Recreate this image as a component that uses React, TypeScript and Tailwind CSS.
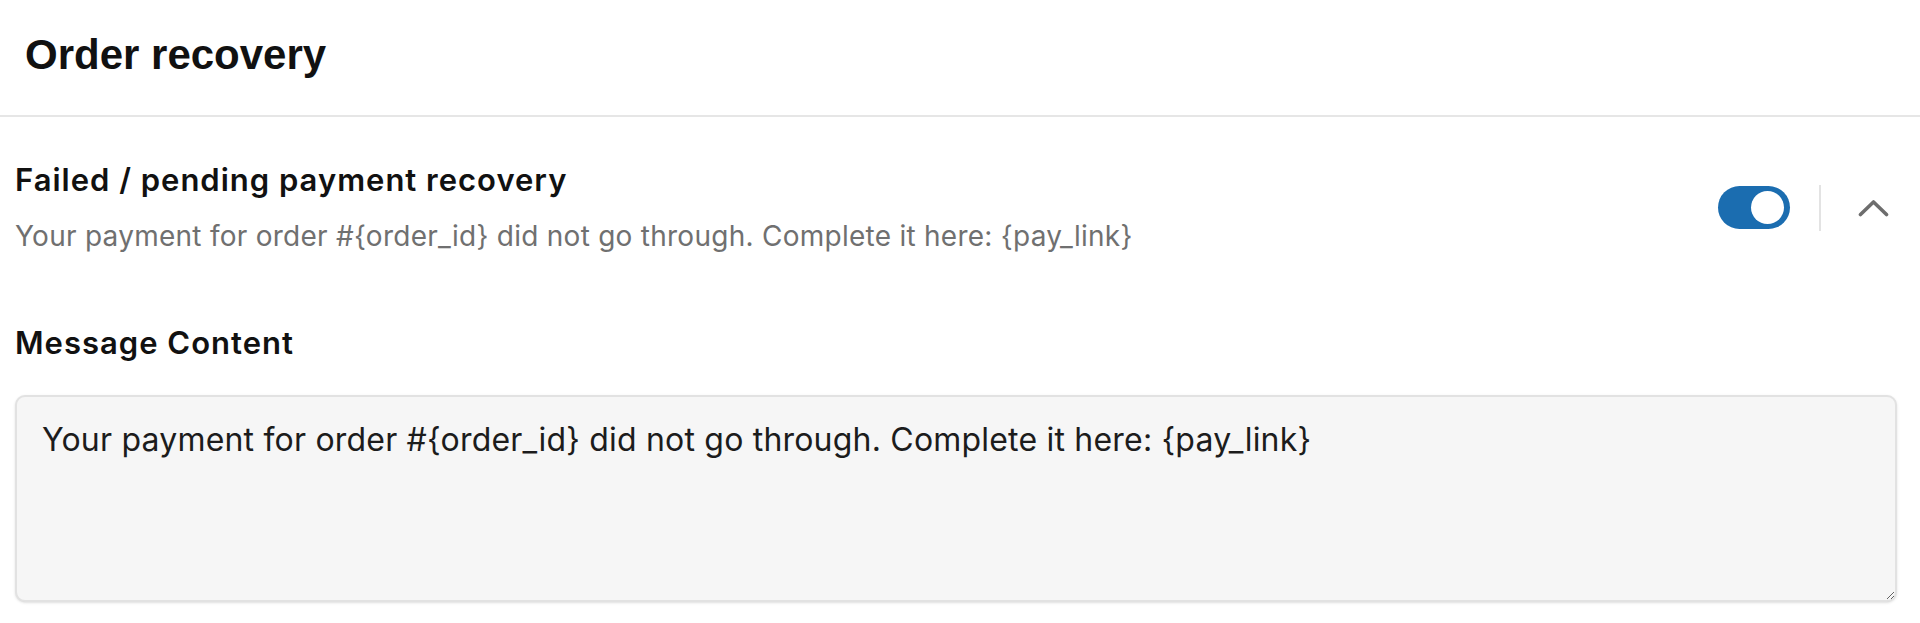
import { useState } from "react";

export default function App() {
  const [enabled, setEnabled] = useState(true);
  const message =
    "Your payment for order #{order_id} did not go through. Complete it here: {pay_link}";

  return (
    <div className="min-h-screen bg-white text-[#111] font-['Inter','Noto_Sans',sans-serif]">
      {/* Page header */}
      <header className="h-[117px] border-b-2 border-[#e6e6e6] pl-[25px] pt-[34px]">
        <h1 className="text-[42px] leading-[42px] font-bold font-['Liberation_Sans','Arial',sans-serif] text-[#111]">
          Order recovery
        </h1>
      </header>

      <section className="pl-[15px] pr-[31px]">
        {/* Rule header */}
        <div className="flex items-center pt-[45px]">
          <div className="flex-1">
            <h2 className="text-[31px] leading-[36px] font-semibold tracking-[1px] text-[#111]">
              Failed / pending payment recovery
            </h2>
            <p className="mt-[21px] text-[28px] leading-[34px] tracking-[0.26px] text-[#707070]">
              {message}
            </p>
          </div>
          <div className="flex items-center">
            <button
              type="button"
              onClick={() => setEnabled(!enabled)}
              className={`flex h-[43px] w-[72px] items-center rounded-full px-[6px] ${
                enabled ? "justify-end bg-[#1b6db0]" : "justify-start bg-[#cfcfcf]"
              }`}
              aria-label="Toggle recovery"
            >
              <span className="h-[33px] w-[33px] rounded-full bg-white" />
            </button>
            <div className="ml-[29px] h-[46px] w-[2px] bg-[#e3e3e3]" />
            <button type="button" className="ml-[37px]" aria-label="Collapse">
              <svg width="31" height="18" viewBox="0 0 31 18" fill="none">
                <polyline
                  points="2.5,15.5 15.5,3 28.5,15.5"
                  stroke="#6d6d6d"
                  strokeWidth="3.6"
                  strokeLinecap="round"
                  strokeLinejoin="round"
                />
              </svg>
            </button>
          </div>
        </div>

        {/* Message content */}
        <h3 className="mt-[72px] text-[31px] leading-[36px] font-semibold tracking-[1px] text-[#111]">
          Message Content
        </h3>
        <div className="mt-[34px]">
          <textarea
            defaultValue={message}
            className="block h-[207px] w-[1882px] rounded-[10px] border-2 border-[#e2e2e2] bg-[#f6f6f6] pl-[25px] pr-[25px] pt-[19px] text-[32px] leading-[48px] tracking-[0.2px] text-[#1c1c1c] shadow-sm outline-none"
          />
        </div>
      </section>
    </div>
  );
}
